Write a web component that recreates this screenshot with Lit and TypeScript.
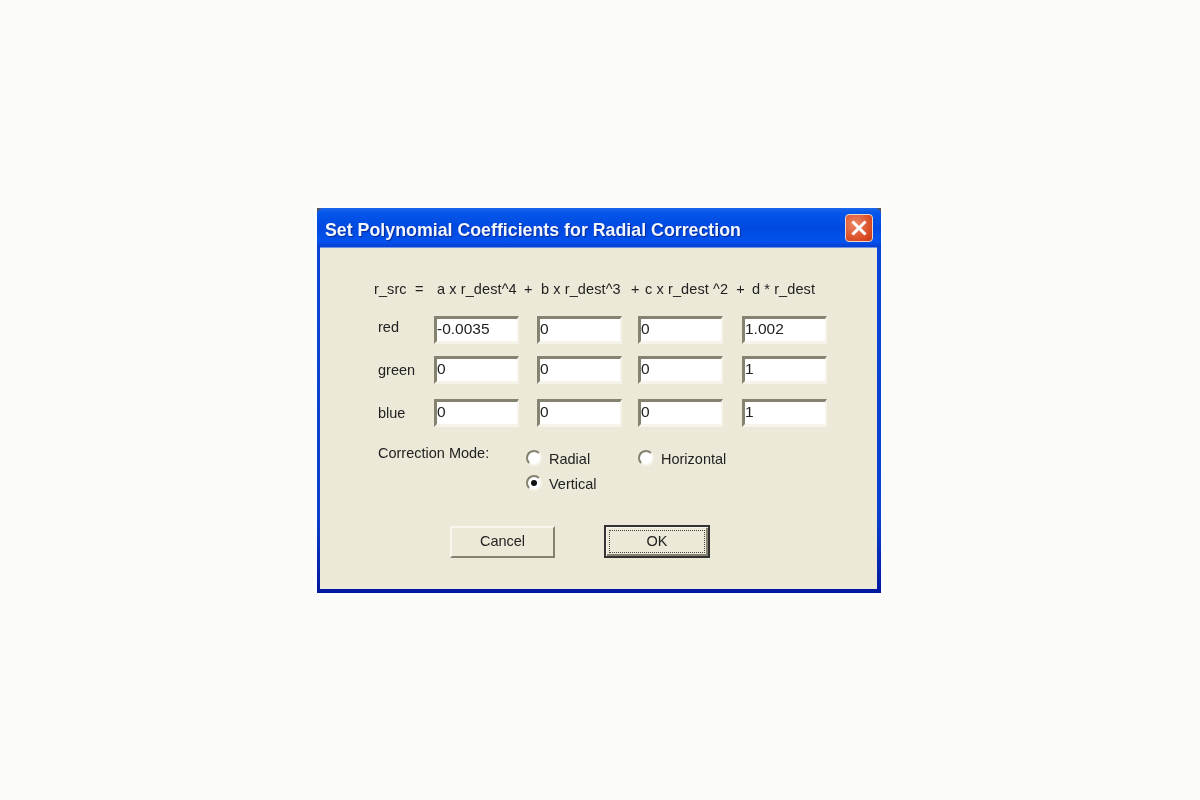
import { LitElement, html, css } from "lit";
import { customElement } from "lit/decorators.js";

const ROWS: [string, string[]][] = [
  ["red", ["-0.0035", "0", "0", "1.002"]],
  ["green", ["0", "0", "0", "1"]],
  ["blue", ["0", "0", "0", "1"]],
];

@customElement("app-root")
export class AppRoot extends LitElement {
  static styles = css`
    :host {
      display: flex;
      justify-content: center;
      width: 1200px;
      height: 800px;
      background: #fbfbf9;
      font-family: "Liberation Sans", Arial, sans-serif;
      color: #222;
      font-size: 14.5px;
    }
    .window {
      box-sizing: border-box;
      width: 564px;
      height: 385px;
      margin: 208px 0 0 -2px;
      display: flex;
      flex-direction: column;
      background: linear-gradient(#555 0, #555 8px, #0a45d8 8px, #0a3fd0 80%, #0018a0);
      padding: 0 4px 4px 3px;
      filter: blur(0.7px);
      box-shadow: 0 0 5px 2px #fff;
    }
    .title {
      height: 39px;
      flex: none;
      margin: 0 -4px 0 -3px;
      border-radius: 6px 6px 0 0;
      display: flex;
      align-items: center;
      justify-content: space-between;
      padding: 0 8px 0 8px;
      background: linear-gradient(#1a66ea 0, #0556ea 12%, #0049e0 50%, #0352ee 85%, #0a3fd0 100%);
      color: #f2f6ff;
      font-weight: 700;
      font-size: 17.8px;
      text-shadow: 1px 1px 1px #0a2a90;
    }
    .title span { margin-top: 5px; }
    .close {
      width: 28px;
      height: 28px;
      box-sizing: border-box;
      border: 1px solid #f0d4c4;
      border-radius: 4px;
      background: radial-gradient(circle at 35% 35%, #ee8866, #d84a22 70%, #c23a18);
      display: flex;
      align-items: center;
      justify-content: center;
    }
    .body {
      flex: 1;
      background: #ece9d8;
      border-top: 1px solid #6f94e8;
      padding: 31px 0 0 58px;
      display: flex;
      flex-direction: column;
    }
    .eq {
      display: flex;
      height: 20px;
      align-items: center;
      margin-left: -4px;
      white-space: pre;
      letter-spacing: 0.1px;
    }
    .e1 { width: 63px; }
    .e2 { width: 87px; }
    .e3 { width: 17px; }
    .e4 { width: 90px; }
    .e5 { width: 14px; }
    .e6 { width: 107px; }
    .grid {
      display: grid;
      grid-template-columns: 56px 103px 101px 104px 85px;
      grid-template-rows: 40px 43px 28px;
      margin-top: 17px;
      align-items: start;
    }
    .lbl { height: 28px; display: flex; align-items: center; }
    .lbl:first-child { margin-top: -3px; }
    .field {
      box-sizing: border-box;
      width: 85px;
      height: 28px;
      background: #fff;
      border-top: 3px solid #85826f;
      border-left: 3px solid #85826f;
      border-right: 2px solid #f6f4ea;
      border-bottom: 3px solid #f6f4ea;
      padding-bottom: 2px;
      display: flex;
      align-items: center;
      font-size: 15.5px;
    }
    .mode {
      display: flex;
      margin-top: 17px;
    }
    .mode-lbl { width: 148px; margin-top: 1px; }
    .radios {
      display: grid;
      grid-template-columns: 112px auto;
      grid-auto-rows: 24.5px;
      margin-top: 6px;
      justify-content: start;
    }
    .radio { display: flex; align-items: center; gap: 7px; height: 16px; }
    .radio b { font-weight: 400; margin-top: 2px; }
    .dot {
      width: 16px;
      height: 16px;
      box-sizing: border-box;
      border-radius: 50%;
      background: #fff;
      border: 2px solid;
      border-color: #85826f #f6f4ea #f6f4ea #85826f;
      display: flex;
      align-items: center;
      justify-content: center;
    }
    .dot i {
      width: 6px;
      height: 6px;
      border-radius: 50%;
      background: #111;
    }
    .buttons {
      display: flex;
      margin: 26px 0 0 72px;
      gap: 49px;
      align-items: center;
    }
    .btn {
      box-sizing: border-box;
      width: 105px;
      height: 32px;
      padding-bottom: 2px;
      display: flex;
      align-items: center;
      justify-content: center;
      background: #ece9d8;
      border: 2px solid;
      border-color: #f8f6ee #85826f #85826f #f8f6ee;
    }
    .ok {
      width: 106px;
      height: 33px;
      border: 2px solid #333;
      box-shadow: inset 1px 1px 0 #f8f6ee, inset -2px -2px 0 #85826f;
      padding: 3px;
    }
    .focus {
      flex: 1;
      align-self: stretch;
      border: 1px dotted #444;
      padding-bottom: 1px;
      display: flex;
      align-items: center;
      justify-content: center;
    }
  `;

  private radio(label: string, checked = false) {
    return html`<div class="radio">
      <span class="dot">${checked ? html`<i></i>` : ""}</span><b>${label}</b>
    </div>`;
  }

  render() {
    return html`
      <div class="window">
        <div class="title">
          <span>Set Polynomial Coefficients for Radial Correction</span>
          <div class="close">
            <svg width="18" height="18" viewBox="0 0 18 18">
              <path d="M3.5 3.5 L14.5 14.5 M14.5 3.5 L3.5 14.5" stroke="#fff" stroke-width="3" stroke-linecap="square" fill="none" />
            </svg>
          </div>
        </div>
        <div class="body">
          <div class="eq">
            <span class="e1">r_src  =</span>
            <span class="e2">a x r_dest^4</span>
            <span class="e3">+</span>
            <span class="e4">b x r_dest^3</span>
            <span class="e5">+</span>
            <span class="e6">c x r_dest ^2  +</span>
            <span>d * r_dest</span>
          </div>
          <div class="grid">
            ${ROWS.map(
              ([name, vals]) => html`
                <div class="lbl">${name}</div>
                ${vals.map((v) => html`<div class="field">${v}</div>`)}
              `
            )}
          </div>
          <div class="mode">
            <div class="mode-lbl">Correction Mode:</div>
            <div class="radios">
              ${this.radio("Radial")} ${this.radio("Horizontal")} ${this.radio("Vertical", true)}
            </div>
          </div>
          <div class="buttons">
            <div class="btn">Cancel</div>
            <div class="btn ok"><div class="focus">OK</div></div>
          </div>
        </div>
      </div>
    `;
  }
}
